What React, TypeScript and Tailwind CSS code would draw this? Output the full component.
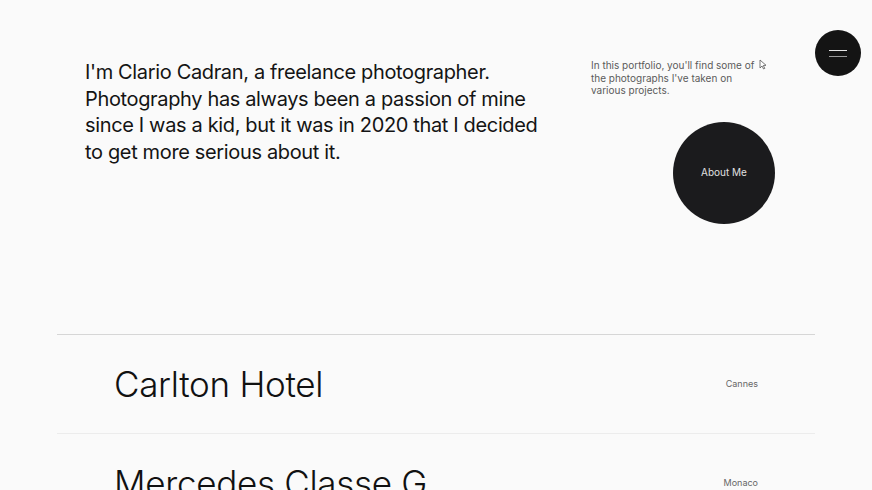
import React from "react";

const rows = [
  { title: "Carlton Hotel", place: "Cannes" },
  { title: "Mercedes Classe G", place: "Monaco" },
];

export default function App() {
  return (
    <div
      className="relative h-[490px] overflow-hidden bg-[#fafafa] text-[#111]"
      style={{ fontFamily: "Inter, 'Liberation Sans', sans-serif" }}
    >
      <button className="absolute left-[815px] top-[30px] flex h-[46px] w-[46px] flex-col items-center justify-center gap-[5px] rounded-full bg-[#141414]">
        <span className="block h-px w-[18px] bg-[#e5e5e5]" />
        <span className="block h-px w-[18px] bg-[#9a9a9a]" />
      </button>

      <section className="flex pl-[85px] pt-[59px]">
        <p className="w-[470px] text-[20px] leading-[26.5px] tracking-[-0.35px] text-[#141414]">
          I'm Clario Cadran, a freelance photographer. Photography has always been a passion of mine since I was a kid, but it was in 2020 that I decided to get more serious about it.
        </p>
        <div className="ml-[36px] flex flex-col">
          <p className="relative w-[168px] text-[10px] leading-[12.5px] text-[#5a5a5a]">
            In this portfolio, you'll find some of the photographs I've taken on various projects.
            <svg className="absolute left-[168px] top-[0px]" width="8" height="11" viewBox="0 0 8 11">
              <path d="M1 1 L1 9 L3 7 L4.6 10 L5.8 9.4 L4.3 6.5 L7 6.3 Z" fill="#fff" stroke="#555" strokeWidth="0.8" strokeLinejoin="round" />
            </svg>
          </p>
          <button className="ml-[82px] mt-[25px] flex h-[102px] w-[102px] items-center justify-center rounded-full bg-[#1b1b1d] text-[10px] text-[#e0e0e0]">
            About Me
          </button>
        </div>
      </section>

      <section className="mx-[57px] mt-[110px] w-[758px]">
        {rows.map((r, i) => (
          <div
            key={r.title}
            className={`flex h-[99px] items-center justify-between border-t pl-[57px] pr-[57px] ${i === 0 ? "border-[#d6d6d6]" : "border-[#ececec]"}`}
          >
            <span className="pt-[1px] text-[35px] font-light leading-none tracking-[-0.3px] text-[#111]">{r.title}</span>
            <span className="text-[9px] text-[#666]">{r.place}</span>
          </div>
        ))}
      </section>
    </div>
  );
}
